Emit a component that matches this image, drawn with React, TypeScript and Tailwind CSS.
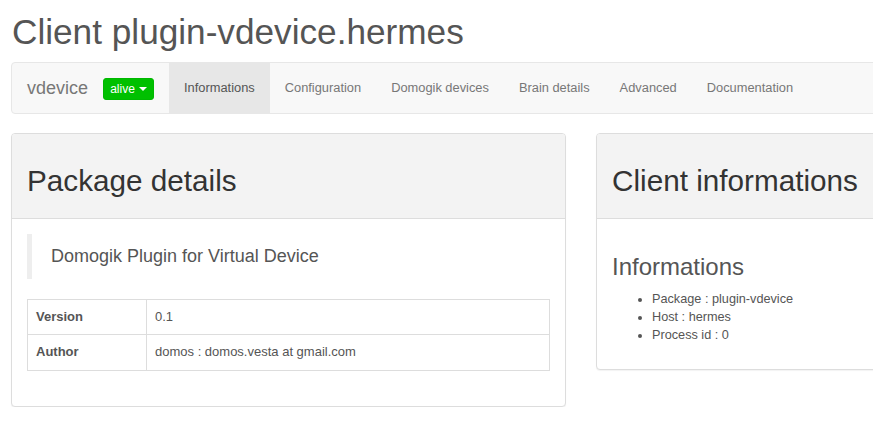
import React from 'react';

const font = 'font-["Liberation_Sans",Arial,sans-serif]';

const navItems = [
  'Informations',
  'Configuration',
  'Domogik devices',
  'Brain details',
  'Advanced',
  'Documentation',
];

const Navbar: React.FC = () => {
  return (
    <nav className="flex h-[52px] rounded-[4px] border border-[#e7e7e7] bg-[#f8f8f8]">
      <a className="h-[50px] px-[15px] py-[15px] text-[18px] leading-[20px] text-[#777]">
        vdevice
      </a>
      <div className="mr-[15px] mt-[15px]">
        <button className="flex h-[22px] w-[51px] items-center justify-center rounded-[3px] border border-[#00b800] bg-[#00c000] text-[12px] leading-[18px] text-white">
          alive
          <span className="ml-[4px] inline-block h-0 w-0 border-x-4 border-t-4 border-x-transparent border-t-white" />
        </button>
      </div>
      <ul className="flex">
        {navItems.map((item, i) => (
          <li key={item}>
            <a
              className={
                i === 0
                  ? 'block h-[50px] bg-[#e7e7e7] px-[15px] py-[16px] text-[12.85px] leading-[18px] text-[#555]'
                  : 'block h-[50px] px-[15px] py-[16px] text-[12.85px] leading-[18px] text-[#777]'
              }
            >
              {item}
            </a>
          </li>
        ))}
      </ul>
    </nav>
  );
};

const Panel: React.FC<{ title: string; children: React.ReactNode }> = (props) => {
  return (
    <div className="self-start rounded-[4px] border border-[#ddd] bg-white shadow-[0_1px_1px_rgba(0,0,0,0.05)]">
      <div className="rounded-t-[3px] border-b border-[#ddd] bg-[#f3f3f3] px-[15px] pb-[11px] pt-[10px]">
        <h2 className="mb-[10px] mt-[20px] text-[29.7px] leading-[33px] text-[#333]">
          {props.title}
        </h2>
      </div>
      <div className="p-[15px]">{props.children}</div>
    </div>
  );
};

export default function App() {
  return (
    <div className={`w-full overflow-hidden bg-white ${font}`}>
      <div className="w-[1151px] pl-[11px]">
        <h1 className="mb-[10px] ml-px mt-[12px] text-[35.2px] leading-[39.6px] text-[#555]">
          Client plugin-vdevice.hermes
        </h1>
        <Navbar />
        <div className="mt-[19px] grid grid-cols-[555px_555px] gap-[30px]">
          <Panel title="Package details">
            <blockquote className="mb-[20px] border-l-[5px] border-[#eee] px-[19px] py-[10px] text-[18px] leading-[25px] text-[#555]">
              Domogik Plugin for Virtual Device
            </blockquote>
            <table className="mb-[20px] w-full border-collapse border border-[#ddd] text-[13px] leading-[18.57px] text-[#555]">
              <tbody>
                <tr>
                  <td className="w-[119px] border border-[#ddd] p-[8px] font-bold">
                    Version
                  </td>
                  <td className="border border-[#ddd] p-[8px]">0.1</td>
                </tr>
                <tr>
                  <td className="border border-[#ddd] p-[8px] font-bold">Author</td>
                  <td className="border border-[#ddd] p-[8px]">
                    domos : domos.vesta at gmail.com
                  </td>
                </tr>
              </tbody>
            </table>
          </Panel>
          <Panel title="Client informations">
            <h3 className="mb-[10px] mt-[20px] text-[24px] leading-[26.4px] text-[#555]">
              Informations
            </h3>
            <ul className="mb-[10px] list-disc pl-[40px] text-[12.7px] leading-[18px] text-[#555]">
              <li>Package : plugin-vdevice</li>
              <li>Host : hermes</li>
              <li>Process id : 0</li>
            </ul>
          </Panel>
        </div>
      </div>
    </div>
  );
}
